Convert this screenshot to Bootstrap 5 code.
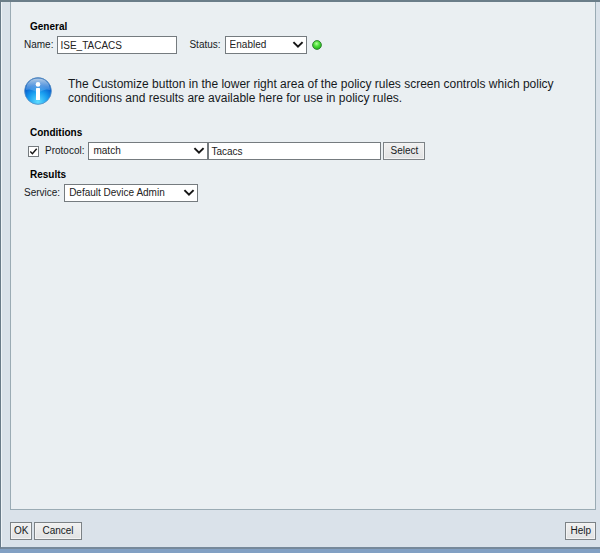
<!DOCTYPE html>
<html lang="en">
<head>
<meta charset="utf-8">
<meta name="viewport" content="width=device-width, initial-scale=1">
<title>Policy rule</title>
<link href="https://cdn.jsdelivr.net/npm/bootstrap@5.3.0/dist/css/bootstrap.min.css" rel="stylesheet">
<style>
body{font-family:"Liberation Sans",Arial,sans-serif;font-size:10px;line-height:14px;color:#161a1d;background:#82a0c3}
.dialog{background:#dae2ea;border:1px solid #687a88;border-top:2px solid #6b7e89;border-right:0;border-bottom:2px solid #76899b;box-shadow:inset 1px 0 #eef3f7;margin-bottom:4px;padding:0 4px 7px 9px}
.pane{background:#eaeff2;border:1px solid #9aabb4;border-top:0;padding:18px 13px 0;margin-bottom:12px}
h2.group-title{font-size:10px;line-height:14px;font-weight:700;margin:0 0 2px 6px;color:#000}
.line{min-height:18px;margin-bottom:8px}
.field{font:inherit;height:18px;border:1px solid #757b7f;border-radius:0;color:#222;background-color:#fff;padding:0 2px}
.field:focus{box-shadow:none}
select.field{appearance:none;padding:0 16px 0 4px;background-image:url("data:image/svg+xml,%3Csvg xmlns='http://www.w3.org/2000/svg' viewBox='0 0 10 7'%3E%3Cpath d='M1 1l4 4 4-4' fill='none' stroke='%23151515' stroke-width='1.7'/%3E%3C/svg%3E");background-repeat:no-repeat;background-position:right 2px center;background-size:12px 8px}
.w-name{width:120px}.w-status{width:82px}.w-match{width:120px}.w-value{width:173px}.w-service{width:134px}
.check{appearance:none;width:11px;height:11px;margin:0 6px 0 4px;border:1px solid #757b7f;background:#fff}
.check:checked{background:#fff url("data:image/svg+xml,%3Csvg xmlns='http://www.w3.org/2000/svg' viewBox='0 0 9 9'%3E%3Cpath d='M1.3 4.6l2.1 2.2L7.7 1.7' fill='none' stroke='%23151515' stroke-width='1.4'/%3E%3C/svg%3E") center/9px 9px no-repeat}
.btn.push{font:inherit;height:18px;line-height:14px;padding:0 6px;border:1px solid #7c8286;border-radius:0;color:#161a1d;background:linear-gradient(#f1f1f1,#e1e2e3);box-shadow:inset 0 0 0 1px #f3f3f3}
.btn.push.tight{padding:0 3px}.btn.push.wide{padding:0 7px}.btn.push.help{padding:0 4px}
.after-field{margin-left:2px}
.notice{font-size:12px;margin:23px 0 21px;gap:16px}
.lamp{margin-left:5px}
footer{gap:2px}
</style>
<script defer src="https://cdn.jsdelivr.net/npm/bootstrap@5.3.0/dist/js/bootstrap.bundle.min.js"></script>
</head>
<body class="d-flex flex-column min-vh-100">
<form class="dialog flex-grow-1 d-flex flex-column">
  <main class="pane flex-grow-1">
    <h2 class="group-title">General</h2>
    <div class="line d-flex align-items-center">
      <label for="name" class="me-1">Name:</label>
      <input id="name" class="field w-name" type="text" value="ISE_TACACS">
      <label for="status" class="ms-2 ps-1 me-1">Status:</label>
      <select id="status" class="field w-status"><option>Enabled</option><option>Disabled</option></select>
      <svg class="lamp" width="10" height="10" viewBox="0 0 10 10" role="img" aria-label="Enabled">
        <defs><radialGradient id="green" cx=".45" cy=".35" r=".6"><stop offset="0" stop-color="#b4ff9c"/><stop offset=".5" stop-color="#4fe03b"/><stop offset="1" stop-color="#25b51c"/></radialGradient></defs>
        <circle cx="5" cy="5" r="4.4" fill="url(#green)" stroke="#2d7d2c" stroke-width=".9"/>
      </svg>
    </div>
    <div class="notice d-flex align-items-center">
      <svg class="flex-shrink-0" width="28" height="28" viewBox="0 0 28 28" aria-hidden="true">
        <defs>
          <radialGradient id="orb" cx=".5" cy=".9" r=".9"><stop offset="0" stop-color="#5fdcff"/><stop offset=".4" stop-color="#1a9ff0"/><stop offset=".7" stop-color="#0763d0"/><stop offset="1" stop-color="#2a6bb5"/></radialGradient>
          <linearGradient id="gloss" x2="0" y2="1"><stop offset="0" stop-color="#fff" stop-opacity=".65"/><stop offset="1" stop-color="#8fc4f3" stop-opacity=".25"/></linearGradient>
        </defs>
        <circle cx="14" cy="14" r="13.4" fill="url(#orb)" stroke="#5a8fc4" stroke-width=".8"/>
        <path d="M2 13C2 6 7 1.4 14 1.4S26 6 26 13C20 11 18 15 14 15S8 11 2 13z" fill="url(#gloss)"/>
        <circle cx="14" cy="7.4" r="2.3" fill="#fff"/>
        <rect x="12" y="11" width="4" height="12" rx=".6" fill="#fff"/>
      </svg>
      <p class="mb-0">The Customize button in the lower right area of the policy rules screen controls which policy conditions and results are available here for use in policy rules.</p>
    </div>
    <h2 class="group-title">Conditions</h2>
    <div class="line d-flex align-items-center">
      <input id="protocol" class="check" type="checkbox" checked>
      <label for="protocol" class="me-1">Protocol:</label>
      <select class="field w-match" aria-label="Protocol operator"><option>match</option></select>
      <input class="field w-value" type="text" value="Tacacs" aria-label="Protocol value">
      <button type="button" class="btn push after-field">Select</button>
    </div>
    <h2 class="group-title">Results</h2>
    <div class="line d-flex align-items-center">
      <label for="service" class="me-1">Service:</label>
      <select id="service" class="field w-service"><option>Default Device Admin</option></select>
    </div>
  </main>
  <footer class="d-flex">
    <button type="submit" class="btn push tight">OK</button>
    <button type="button" class="btn push wide">Cancel</button>
    <button type="button" class="btn push help ms-auto">Help</button>
  </footer>
</form>
</body>
</html>
